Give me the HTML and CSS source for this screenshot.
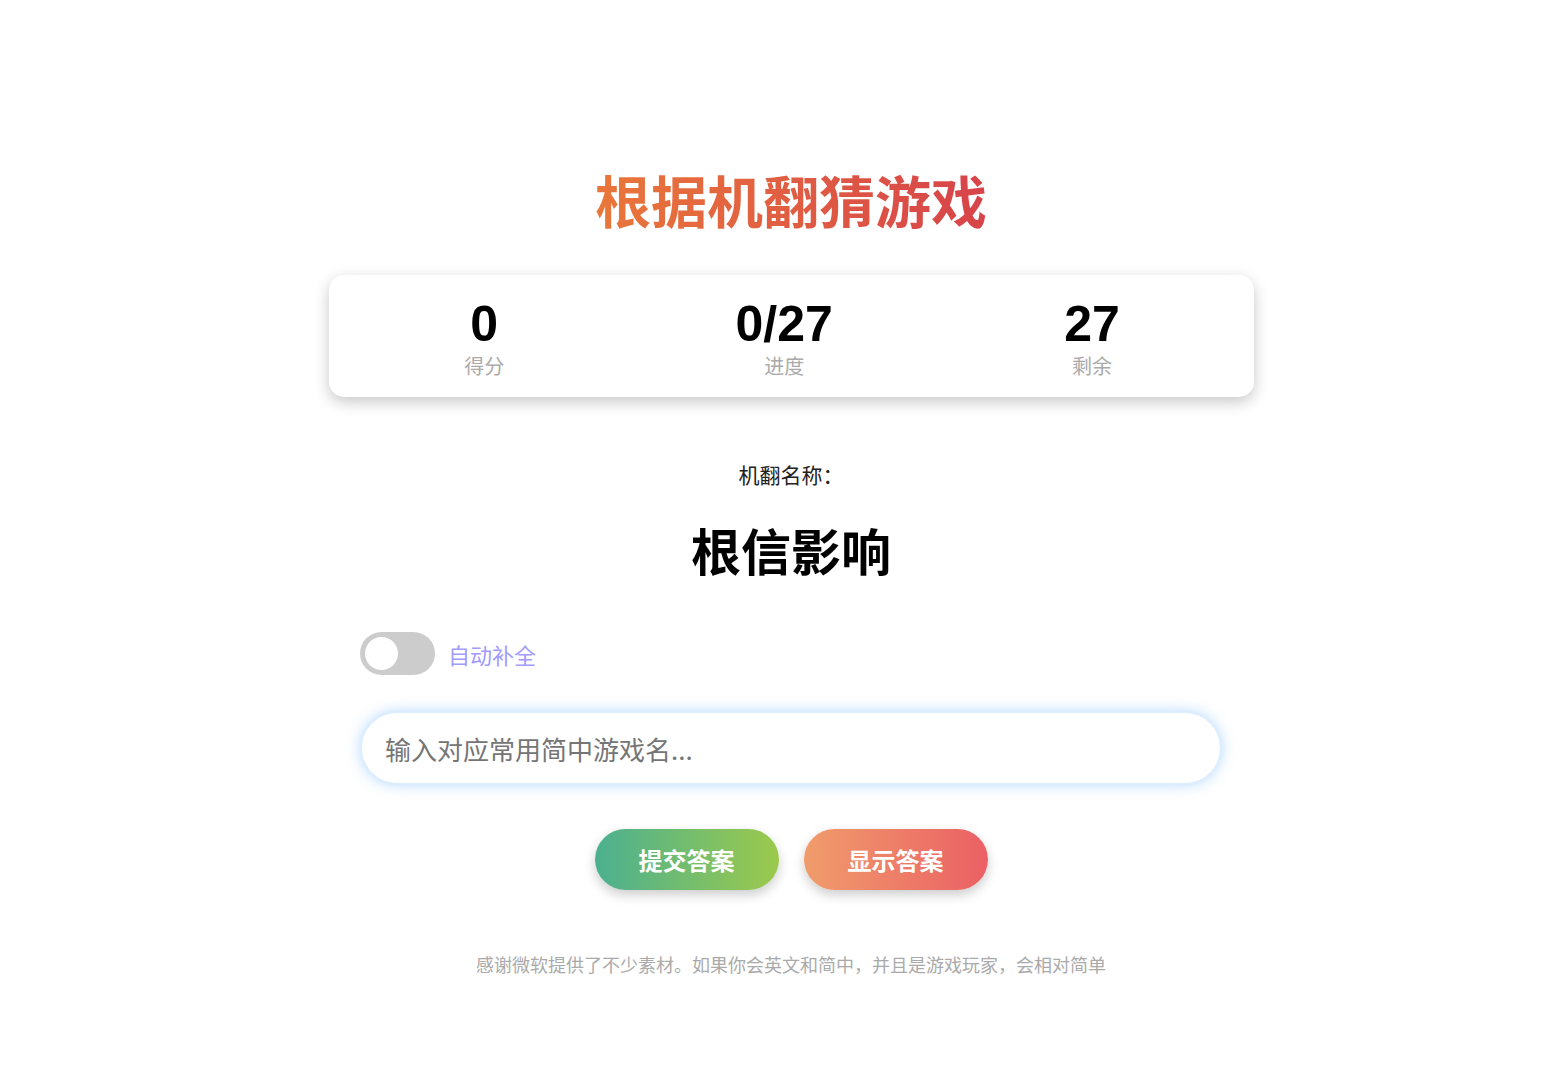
FILE: index.html
```html
<!DOCTYPE html>
<html lang="zh">
<head>
<meta charset="utf-8">
<title>根据机翻猜游戏</title>
<link rel="stylesheet" href="styles.css">
</head>
<body>
<div class="page">
  <h1 class="title">根据机翻猜游戏</h1>
  <div class="stats">
    <div class="stat"><div class="num">0</div><div class="label">得分</div></div>
    <div class="stat"><div class="num">0/27</div><div class="label">进度</div></div>
    <div class="stat"><div class="num">27</div><div class="label">剩余</div></div>
  </div>
  <div class="prompt">机翻名称：</div>
  <div class="mt-name">根信影响</div>
  <div class="form">
    <label class="toggle-row">
      <span class="switch"><span class="knob"></span></span>
      <span class="toggle-label">自动补全</span>
    </label>
    <input class="answer" type="text" placeholder="输入对应常用简中游戏名...">
    <div class="buttons">
      <button class="btn btn-submit">提交答案</button>
      <button class="btn btn-show">显示答案</button>
    </div>
  </div>
  <p class="footer">感谢微软提供了不少素材。如果你会英文和简中，并且是游戏玩家，会相对简单</p>
</div>
</body>
</html>
```

FILE: styles.css
```css
* { box-sizing: border-box; }
html, body { margin: 0; padding: 0; background: #fff; }
body {
  font-family: "Noto Sans CJK SC", "Noto Sans", sans-serif;
  color: #000;
  padding-left: 15px;
}
.page {
  width: 925px;
  margin: 0 auto;
  padding-top: 160px;
  display: flex;
  flex-direction: column;
  align-items: center;
}
.title {
  margin: 0;
  font-size: 56px;
  font-weight: 700;
  line-height: 78px;
  background: linear-gradient(90deg, #e9773a, #d7434a);
  -webkit-background-clip: text;
  background-clip: text;
  color: transparent;
}
.stats {
  margin-top: 37px;
  width: 925px;
  height: 122px;
  background: #fff;
  border-radius: 15px;
  box-shadow: 0 5px 15px rgba(0,0,0,0.22);
  display: flex;
  justify-content: space-around;
  padding: 21px 18px 0 20px;
}
.stat { display: flex; flex-direction: column; align-items: center; }
.num {
  font-family: "Liberation Sans", Arial, sans-serif;
  font-size: 50px;
  font-weight: 700;
  line-height: 56px;
}
.label {
  font-size: 20px;
  color: #aaa;
  line-height: 28px;
}
.prompt {
  margin-top: 62px;
  font-size: 21px;
  color: #222;
  line-height: 30px;
}
.mt-name {
  margin-top: 25px;
  font-size: 50px;
  font-weight: 700;
  line-height: 70px;
}
.form {
  width: 862px;
  margin-top: 48px;
  display: flex;
  flex-direction: column;
}
.toggle-row {
  display: flex;
  align-items: center;
  gap: 13px;
  height: 43px;
}
.switch {
  width: 75px;
  height: 43px;
  border-radius: 22px;
  background: #ccc;
  position: relative;
  display: block;
}
.knob {
  position: absolute;
  left: 5px;
  top: 5px;
  width: 33px;
  height: 33px;
  border-radius: 50%;
  background: #fff;
}
.toggle-label {
  font-size: 22px;
  color: #a29bfe;
}
.answer {
  margin-top: 36px;
  width: 862px;
  height: 74px;
  border: 2px solid #dcedff;
  border-radius: 40px;
  box-shadow: 0 0 14px rgba(100, 175, 255, 0.45);
  padding: 0 23px;
  font-family: "Noto Sans CJK SC", sans-serif;
  font-size: 26px;
  outline: none;
  background: #fff;
}
.answer::placeholder { color: #757575; }
.buttons {
  margin-top: 44px;
  display: flex;
  justify-content: center;
  gap: 25px;
}
.btn {
  width: 184px;
  height: 61px;
  border: none;
  border-radius: 31px;
  color: #fff;
  font-family: "Noto Sans CJK SC", sans-serif;
  font-size: 24px;
  font-weight: 700;
  box-shadow: 0 5px 12px rgba(0,0,0,0.2);
  cursor: pointer;
}
.btn-submit { background: linear-gradient(90deg, #4bb090, #9cc94c); }
.btn-show { background: linear-gradient(90deg, #f09c6b, #eb6065); }
.footer {
  margin: 60px 0 0;
  font-size: 18px;
  color: #aaa;
  line-height: 28px;
}
```
